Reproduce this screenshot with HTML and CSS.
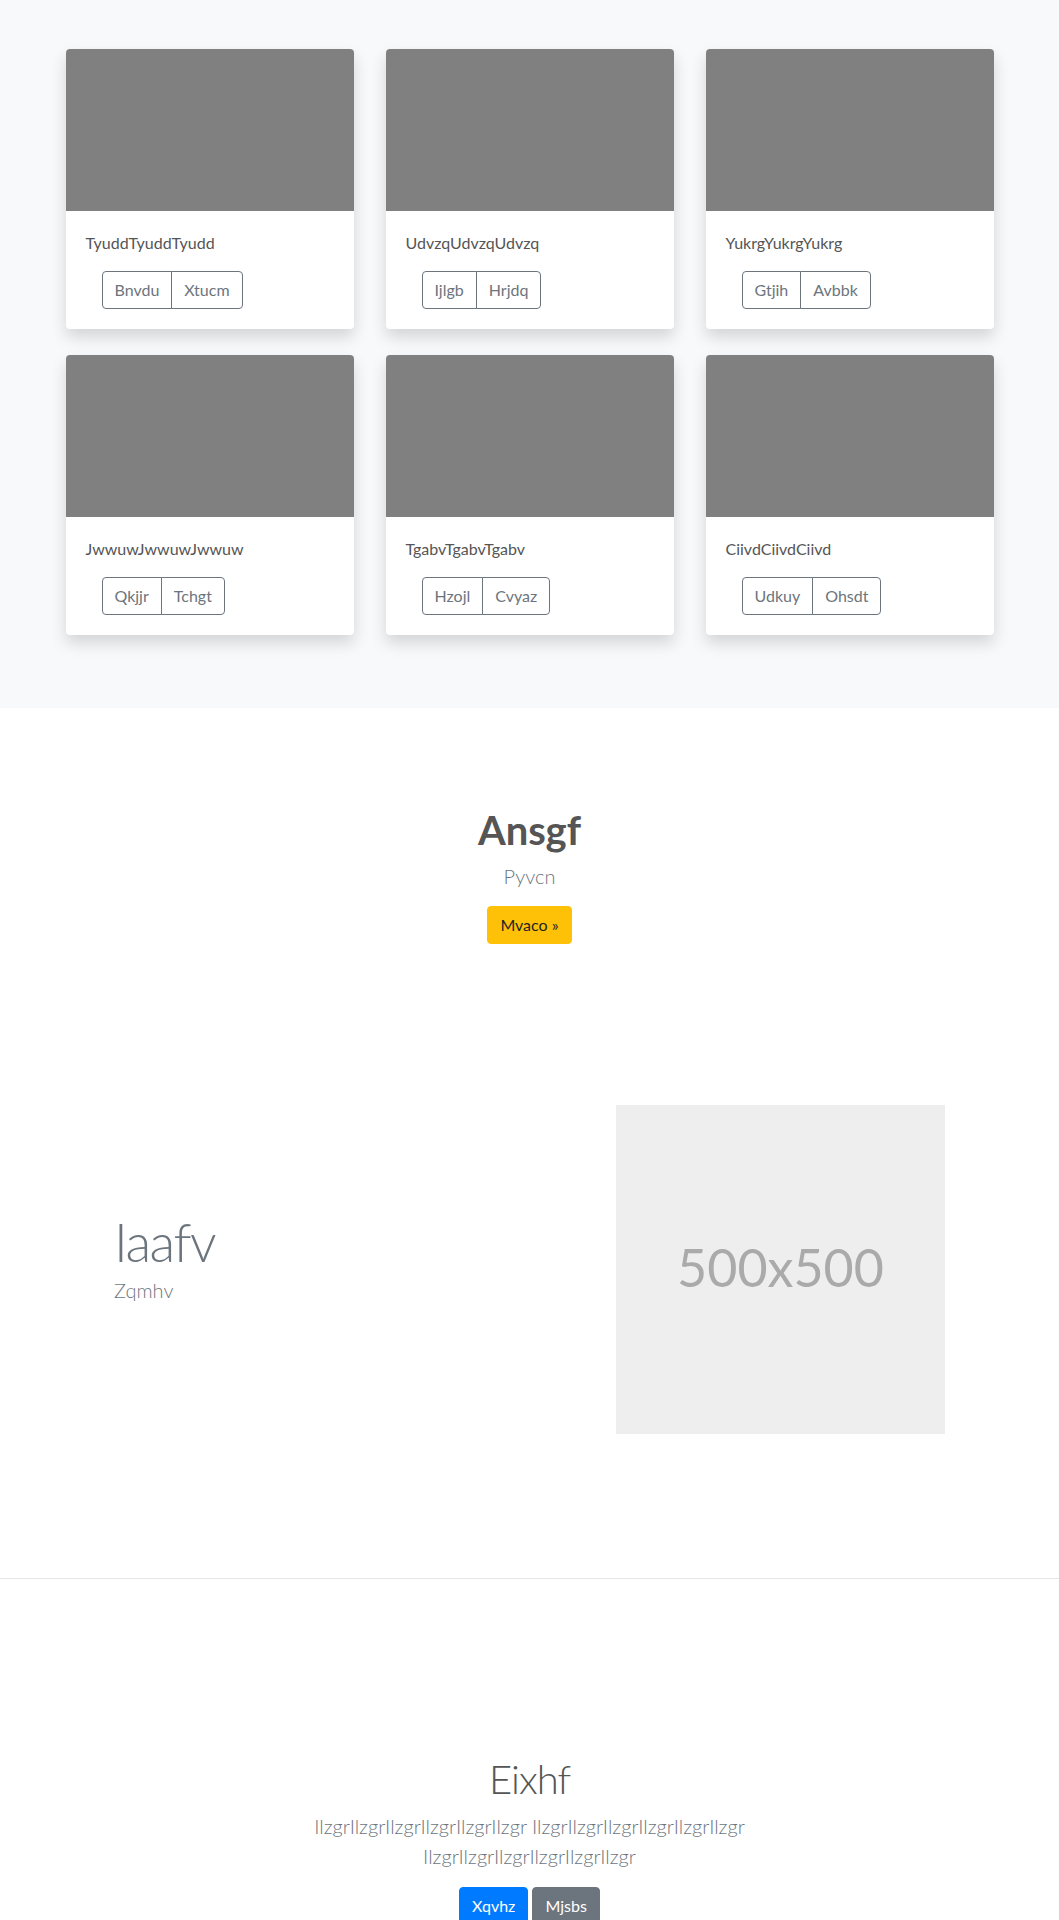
FILE: index.html
```html
<!DOCTYPE html>
<html lang="en">
<head>
<meta charset="utf-8">
<title>Page</title>
<link rel="stylesheet" href="styles.css">
</head>
<body>
<section class="album">
  <div class="card-grid">
    <div class="card">
      <div class="card-img"></div>
      <div class="card-body">
        <p class="card-text">TyuddTyuddTyudd</p>
        <div class="btn-group"><button class="btn btn-outline">Bnvdu</button><button class="btn btn-outline">Xtucm</button></div>
      </div>
    </div>
    <div class="card">
      <div class="card-img"></div>
      <div class="card-body">
        <p class="card-text">UdvzqUdvzqUdvzq</p>
        <div class="btn-group"><button class="btn btn-outline">Ijlgb</button><button class="btn btn-outline">Hrjdq</button></div>
      </div>
    </div>
    <div class="card">
      <div class="card-img"></div>
      <div class="card-body">
        <p class="card-text">YukrgYukrgYukrg</p>
        <div class="btn-group"><button class="btn btn-outline">Gtjih</button><button class="btn btn-outline">Avbbk</button></div>
      </div>
    </div>
    <div class="card">
      <div class="card-img"></div>
      <div class="card-body">
        <p class="card-text">JwwuwJwwuwJwwuw</p>
        <div class="btn-group"><button class="btn btn-outline">Qkjjr</button><button class="btn btn-outline">Tchgt</button></div>
      </div>
    </div>
    <div class="card">
      <div class="card-img"></div>
      <div class="card-body">
        <p class="card-text">TgabvTgabvTgabv</p>
        <div class="btn-group"><button class="btn btn-outline">Hzojl</button><button class="btn btn-outline">Cvyaz</button></div>
      </div>
    </div>
    <div class="card">
      <div class="card-img"></div>
      <div class="card-body">
        <p class="card-text">CiivdCiivdCiivd</p>
        <div class="btn-group"><button class="btn btn-outline">Udkuy</button><button class="btn btn-outline">Ohsdt</button></div>
      </div>
    </div>
  </div>
</section>

<section class="cta">
  <h1 class="cta-title">Ansgf</h1>
  <p class="cta-lead">Pyvcn</p>
  <a class="btn btn-warning" href="#">Mvaco »</a>
</section>

<section class="feature">
  <div class="feature-inner">
    <div class="feature-text">
      <h2 class="feature-title">Iaafv</h2>
      <p class="feature-lead">Zqmhv</p>
    </div>
    <div class="placeholder">500x500</div>
  </div>
</section>

<section class="closing">
  <h1 class="closing-title">Eixhf</h1>
  <div class="closing-body">
    <p class="closing-lead">IlzgrIlzgrIlzgrIlzgrIlzgrIlzgr IlzgrIlzgrIlzgrIlzgrIlzgrIlzgr IlzgrIlzgrIlzgrIlzgrIlzgrIlzgr</p>
  </div>
  <div class="closing-actions">
    <a class="btn btn-primary" href="#">Xqvhz</a>
    <a class="btn btn-secondary" href="#">Mjsbs</a>
  </div>
</section>
</body>
</html>
```

FILE: styles.css
```css
* { box-sizing: border-box; }

html, body {
  margin: 0;
  padding: 0;
}

body {
  font-family: Lato, "Open Sans", "Noto Sans", sans-serif;
  font-size: 16px;
  line-height: 1.5;
  color: #212529;
  background: #fff;
}

/* ---------- album ---------- */
.album {
  background: #f8f9fa;
  padding: 49px 0 73px;
}

.card-grid {
  width: 928px;
  margin: 0 auto;
  display: grid;
  grid-template-columns: repeat(3, 288px);
  column-gap: 32px;
  row-gap: 26px;
}

.card {
  background: #fff;
  border-radius: 4px;
  overflow: hidden;
  box-shadow: 0 8px 16px rgba(0, 0, 0, 0.15);
}

.card-img {
  height: 162px;
  background: #808080;
}

.card-body {
  padding: 20px;
}

.card-text {
  margin: 0 0 16px;
  font-size: 16px;
  line-height: 24px;
  color: #555;
}

.btn-group {
  display: inline-flex;
  margin-left: 16px;
}

.btn {
  display: inline-block;
  font-family: inherit;
  font-size: 16px;
  line-height: 24px;
  padding: 6px 12px;
  border: 1px solid transparent;
  border-radius: 4px;
  text-decoration: none;
  cursor: pointer;
  background: transparent;
}

.btn-outline {
  color: #6c757d;
  border-color: #6c757d;
  background: #fff;
}

.btn-group .btn:first-child {
  border-top-right-radius: 0;
  border-bottom-right-radius: 0;
}

.btn-group .btn + .btn {
  margin-left: -1px;
  border-top-left-radius: 0;
  border-bottom-left-radius: 0;
}

/* ---------- call to action ---------- */
.cta {
  text-align: center;
  padding: 98px 0 0;
}

.cta-title {
  margin: 0 0 7px;
  font-size: 40px;
  line-height: 1.2;
  font-weight: 700;
  color: #555;
}

.cta-lead {
  margin: 0 0 15px;
  font-size: 20px;
  line-height: 30px;
  font-weight: 300;
  color: #6c757d;
}

.btn-warning {
  background: #ffc107;
  border-color: #ffc107;
  color: #212529;
}

/* ---------- feature ---------- */
.feature {
  padding: 161px 0 144px;
  border-bottom: 1px solid #e5e5e5;
}

.feature-inner {
  width: 831px;
  margin: 0 auto;
  display: flex;
  justify-content: space-between;
  align-items: center;
}

.feature-text {
  padding-bottom: 26px;
}

.feature-title {
  margin: 0;
  font-size: 53px;
  line-height: 67px;
  font-weight: 300;
  letter-spacing: -1.5px;
  color: #6c757d;
}

.feature-lead {
  margin: 0;
  font-size: 20px;
  line-height: 30px;
  font-weight: 300;
  color: #6c757d;
}

.placeholder {
  width: 329px;
  height: 329px;
  padding-bottom: 6px;
  background: #eee;
  color: #aaa;
  font-size: 52px;
  display: flex;
  align-items: center;
  justify-content: center;
}

/* ---------- closing ---------- */
.closing {
  text-align: center;
  padding: 176px 0 40px;
}

.closing-title {
  margin: 0 0 8px;
  font-size: 40px;
  line-height: 48px;
  font-weight: 300;
  letter-spacing: -1px;
  color: #555;
}

.closing-body {
  max-width: 450px;
  margin: 0 auto;
}

.closing-lead {
  margin: 0 0 16px;
  font-size: 20px;
  line-height: 30px;
  font-weight: 300;
  color: #6c757d;
}

.closing-actions {
  margin-top: 8px;
}

.btn-primary {
  background: #007bff;
  border-color: #007bff;
  color: #fff;
}

.btn-secondary {
  background: #6c757d;
  border-color: #6c757d;
  color: #fff;
}
```
